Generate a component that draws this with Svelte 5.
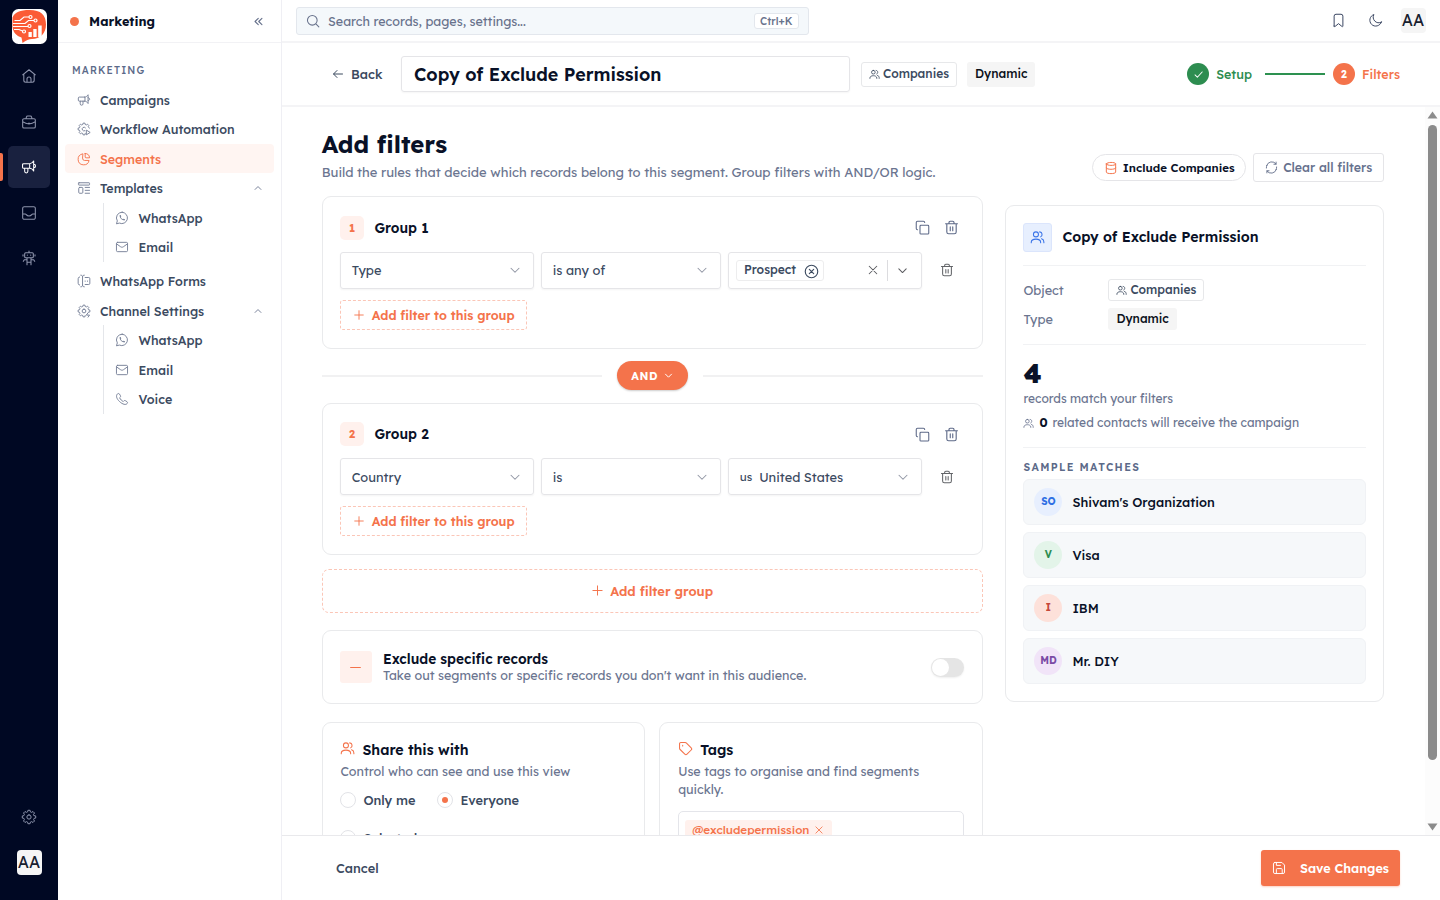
<script>
  function gear(from, to) {
    const points = [];
    for (let tooth = from; tooth < to; tooth++) {
      for (const [offset, radius] of [[-15, 8], [-9, 10.2], [9, 10.2], [15, 8]]) {
        const angle = ((tooth * 45 + offset) * Math.PI) / 180;
        points.push(`${(12 + radius * Math.cos(angle)).toFixed(2)} ${(12 + radius * Math.sin(angle)).toFixed(2)}`);
      }
    }
    return 'M' + points.join('L');
  }
  const hub = 'M12 8.800a3.200 3.200 0 1 0 0 6.400 3.200 3.200 0 0 0 0-6.400Z';

  const icons = {
    home: 'M2.5 10.2 12 2.6l9.5 7.6M4.2 9v9.5a3 3 0 0 0 3 3h9.6a3 3 0 0 0 3-3V9M9 21.5v-5a3 3 0 0 1 6 0v5',
    briefcase: 'M4.5 7h15a2 2 0 0 1 2 2v10a2 2 0 0 1-2 2h-15a2 2 0 0 1-2-2V9a2 2 0 0 1 2-2ZM7.5 7l.6-2.4a2 2 0 0 1 2-1.6h3.8a2 2 0 0 1 2 1.6l.6 2.4M2.5 11.5c6 4.3 13 4.3 19 0M11 14h2',
    megaphone: 'M13 7H4A1.700 1.700 0 0 0 2.300 8.700v3.600A1.700 1.700 0 0 0 4 14h9ZM13 7c2.500 0 4.700-1.700 6-4v15c-1.300-2.300-3.500-4-6-4M19 8c3.800 0 3.800 5 0 5M5.500 14v4.500a2.400 2.400 0 0 0 4.800 0V14',
    inbox: 'M5 2.500h14a2.500 2.500 0 0 1 2.500 2.500v14a2.500 2.500 0 0 1-2.500 2.500H5A2.500 2.500 0 0 1 2.500 19V5A2.500 2.500 0 0 1 5 2.500ZM2.500 13.500h4c1.500 0 1.500 3 5.500 3s4-3 5.500-3h4',
    robot: 'M12 1.500V4M7 4h10a1.500 1.500 0 0 1 1.500 1.500V10a1.500 1.500 0 0 1-1.500 1.500H7A1.500 1.500 0 0 1 5.500 10V5.500A1.500 1.500 0 0 1 7 4ZM9.500 7.500v.5M14.500 7.500v.5M3 7v2M21 7v2M9 11.500v7h6v-7M9 14.500H5L3.500 17M15 14.500h4l1.500 2.500M9 18.500V22M15 18.500V22',
    gear: gear(0, 8) + 'Z' + hub,
    gearPlay: gear(2, 8) + 'L21.500 10.500M14.500 10a3.200 3.200 0 1 0-1 5M16 14.500V22l6-3.750Z',
    gearBolt: gear(2, 9) + hub + 'M19 15l-3 4h5.500l-2.500 3.500',
    pie: 'M14 2.500v6a1.500 1.500 0 0 0 1.500 1.500h6C21.500 5.500 18.500 2.500 14 2.500ZM9.500 3.200A9.500 9.500 0 1 0 20.700 14.500H13a3.500 3.500 0 0 1-3.500-3.500Z',
    template: 'M3.500 3h17a1 1 0 0 1 1 1v2a1 1 0 0 1-1 1h-17a1 1 0 0 1-1-1V4a1 1 0 0 1 1-1ZM4.500 11h4a1.500 1.500 0 0 1 1.500 1.500v7A1.500 1.500 0 0 1 8.500 21h-4A1.500 1.500 0 0 1 3 19.500v-7A1.500 1.500 0 0 1 4.500 11ZM14 11h7.500M14 16h7.500M14 21h7.500',
    whatsapp: 'M12.300 2A9.800 9.800 0 0 0 4 17L2.500 22l5-1.300A9.800 9.800 0 1 0 12.300 2ZM9 7.800c-1.500 3.500 3.500 8.700 7.200 7.200M9 7.800l.8 2M16.200 15l-2-.8',
    mail: 'M4.500 4h15a2 2 0 0 1 2 2v12a2 2 0 0 1-2 2h-15a2 2 0 0 1-2-2V6a2 2 0 0 1 2-2ZM2.500 6.500 9.500 11.500c1.800 1.200 3.200 1.200 5 0L21.500 6.500',
    phone: 'M3.800 3.700c-2.500 2.500-1.500 7.500 4 12.700s10.800 6 12.800 3.600l.6-.8c.6-1 .3-2-.7-2.600l-2.700-1.700c-1-.6-1.900-.4-2.600.3l-1 1c-2.500-1-5-3.500-6.200-6.300l1-1c.7-.8.8-1.700.3-2.600L7.600 3.500c-.6-1-1.700-1.300-2.600-.7Z',
    forms: 'M6.500 2c2 0 3 1 3 3v14c0 2-1 3-3 3M12.500 2c-2 0-3 1-3 3M12.500 22c-2 0-3-1-3-3M4.500 5A3 3 0 0 0 2 8v8a3 3 0 0 0 2.500 3M14 6h6a2 2 0 0 1 2 2v8a2 2 0 0 1-2 2h-6M14 12v.5M18 12v.5',
    up: 'M5 15.500l7-7 7 7',
    down: 'M4 8.500l8 8 8-8',
    collapse: 'M11.500 5l-7 7 7 7M19.500 5l-7 7 7 7',
    search: 'M10.800 2.500a8.300 8.300 0 1 0 0 16.600 8.300 8.300 0 0 0 0-16.600ZM17 17l5 5',
    bookmark: 'M5 21V5a3 3 0 0 1 3-3h8a3 3 0 0 1 3 3v16c0 1-1 1-1.600.4L12 17l-5.400 4.400C6 22 5 22 5 21Z',
    moon: 'M21.500 14.500A9.500 9.500 0 1 1 9.500 2.500c-4.500 7 4 17 12 12Z',
    back: 'M21 12H3.500M10 5l-7 7 7 7',
    users: 'M9.500 3a4 4 0 1 0 0 8 4 4 0 0 0 0-8ZM2 20.500v-1c0-6.500 15-6.500 15 0v1M15.500 3c4.500 0 5 6.500 1.500 8M18.500 14c2.500.8 3.700 2.500 3.700 5v1.500',
    check: 'M4.500 13l5 5L20 6.500',
    database: 'M4 5c0-3.500 16-3.500 16 0s-16 3.500-16 0ZM4 5v14c0 3.500 16 3.500 16 0V5M4 12c0 3.200 16 3.200 16 0',
    refresh: 'M20.500 5.500A10 10 0 0 0 3 8.500M2.500 13a9.500 9.500 0 0 1 1-5M20.500 2v4h-4M3.500 18.500A10 10 0 0 0 21 15.500M21.500 11a9.500 9.500 0 0 1-1 5M3.500 22v-4h4',
    copy: 'M10.500 8.500h10a1.500 1.500 0 0 1 1.500 1.500v11a1.500 1.500 0 0 1-1.500 1.500h-11A1.500 1.500 0 0 1 8 21V10a1.500 1.500 0 0 1 1.500-1.500ZM4 15.500A2 2 0 0 1 2 13.500V4a2 2 0 0 1 2-2h9.500a2 2 0 0 1 2 2',
    trash: 'M2.500 6h19M8 6V4a2 2 0 0 1 2-2h4a2 2 0 0 1 2 2v2M4.500 6v13a3 3 0 0 0 3 3h9a3 3 0 0 0 3-3V6M10 11v6M14 11v6',
    plus: 'M12 3.500v17M3.500 12h17',
    minus: 'M3 12h18',
    close: 'M4.500 4.500l15 15M19.500 4.500l-15 15',
    circleX: 'M12 2a10 10 0 1 0 0 20 10 10 0 0 0 0-20ZM8.500 8.500l7 7M15.500 8.500l-7 7',
    tag: 'M4.500 2.500h7a3 3 0 0 1 2.100.9l7.500 7.500a2.500 2.500 0 0 1 0 3.500l-6.700 6.700a2.500 2.500 0 0 1-3.500 0l-7.500-7.500a3 3 0 0 1-.9-2.100v-7a2 2 0 0 1 2-2ZM7.500 7v1',
    save: 'M5 2.500h12L21.500 7v12a2.500 2.500 0 0 1-2.500 2.500H5A2.500 2.500 0 0 1 2.500 19V5A2.500 2.500 0 0 1 5 2.500ZM7.500 21.500v-7a1.500 1.500 0 0 1 1.500-1.500h7a1.500 1.500 0 0 1 1.500 1.500v7M7.500 2.500v5h7'
  };
  const rail = ['home', 'briefcase', 'megaphone', 'inbox', 'robot'];
  const nav = [
    { icon: 'megaphone', label: 'Campaigns' },
    { icon: 'gearPlay', label: 'Workflow Automation' },
    { icon: 'pie', label: 'Segments', active: true },
    { icon: 'template', label: 'Templates', children: [{ icon: 'whatsapp', label: 'WhatsApp' }, { icon: 'mail', label: 'Email' }] },
    { icon: 'forms', label: 'WhatsApp Forms' },
    { icon: 'gearBolt', label: 'Channel Settings', children: [{ icon: 'whatsapp', label: 'WhatsApp' }, { icon: 'mail', label: 'Email' }, { icon: 'phone', label: 'Voice' }] }
  ];
  const matches = [
    { initials: 'SO', name: "Shivam's Organization", tone: 'blue' },
    { initials: 'V', name: 'Visa', tone: 'green' },
    { initials: 'I', name: 'IBM', tone: 'red' },
    { initials: 'MD', name: 'Mr. DIY', tone: 'purple' }
  ];
</script>

{#snippet icon(name, size = 14, weight = 1.5)}
  <svg width={size} height={size} viewBox="0 0 24 24" fill="none" stroke="currentColor" stroke-width={weight} stroke-linecap="round" stroke-linejoin="round"><path d={icons[name]} /></svg>
{/snippet}

{#snippet companies()}
  <span class="badge outline">{@render icon('users', 11, 1.8)}Companies</span>
{/snippet}

{#snippet groupHead(n)}
  <div class="group-head">
    <span class="num">{n}</span>
    <h3>Group {n}</h3>
    <span class="tools">{@render icon('copy', 15, 1.7)}{@render icon('trash', 15, 1.8)}</span>
  </div>
{/snippet}

{#snippet select(label)}
  <div class="select"><span>{label}</span>{@render icon('down', 12, 2.1)}</div>
{/snippet}

<div class="app">
  <nav class="rail">
    <svg class="logo" width="35" height="35" viewBox="0 0 35 35">
      <rect width="35" height="35" rx="6.500" fill="#fff" />
      <path d="M.5 8.500C3 3 8 1 17.500 1 29 1 34 6 34 15.500c0 9-6 14.500-14 14.500-3 0-6 1.500-9.500 4L9.500 28.500C4.500 27 .5 23 .5 17Z" fill="#fb5b35" />
      <g fill="none" stroke="#fff" stroke-width="1.200">
        <path d="M2.500 11.500H8l4-3.500h5M1 14.500h12l3.500-3h5.500M1 17.500h15M2 20.500h5l3.500 1.500" />
        <circle cx="18.500" cy="8" r="1.500" /><circle cx="23.500" cy="11.500" r="1.500" /><circle cx="17.500" cy="17" r="1.500" /><circle cx="12" cy="22.500" r="1.500" />
      </g>
      <path d="M16.500 23h3.300v5h-3.300zM21.300 20h3.300v8h-3.300zM26.200 16.500h3.500V28h-3.500z" fill="#fff" />
    </svg>
    {#each rail as name}
      <span class="rail-item" class:active={name === 'megaphone'}>{@render icon(name, 16, 1.6)}</span>
    {/each}
    <span class="rail-item bottom">{@render icon('gear', 16, 1.5)}</span>
    <span class="avatar">AA</span>
  </nav>

  <aside>
    <header class="side-head"><i></i><b>Marketing</b>{@render icon('collapse', 11, 2.4)}</header>
    <div class="side-title">MARKETING</div>
    {#each nav as item}
      <div class="nav-item" class:active={item.active}>
        {@render icon(item.icon, 14, 1.6)}<span>{item.label}</span>
        {#if item.children}{@render icon('up', 10, 2.3)}{/if}
      </div>
      {#if item.children}
        <div class="sub">
          {#each item.children as child}
            <div class="nav-item">{@render icon(child.icon, 14, 1.6)}<span>{child.label}</span></div>
          {/each}
        </div>
      {/if}
    {/each}
  </aside>

  <main>
    <header class="topbar">
      <div class="search">{@render icon('search', 14, 1.8)}<span>Search records, pages, settings...</span><kbd>Ctrl+K</kbd></div>
      <div class="top-actions">{@render icon('bookmark', 15, 1.6)}{@render icon('moon', 15, 1.6)}<span class="avatar">AA</span></div>
    </header>

    <header class="pagebar">
      <span class="back">{@render icon('back', 12, 2)}Back</span>
      <div class="title-input">Copy of Exclude Permission</div>
      {@render companies()}
      <span class="badge solid">Dynamic</span>
      <div class="steps">
        <span class="dot done">{@render icon('check', 11, 2.2)}</span><span class="done-text">Setup</span>
        <i></i>
        <span class="dot">2</span><span class="current-text">Filters</span>
      </div>
    </header>

    <div class="viewport">
      <div class="content">
        <section class="left">
          <h1>Add filters</h1>
          <p class="lead">Build the rules that decide which records belong to this segment. Group filters with AND/OR logic.</p>

          <div class="card group">
            {@render groupHead(1)}
            <div class="filters">
              {@render select('Type')}
              {@render select('is any of')}
              <div class="select multi">
                <span class="chip">Prospect {@render icon('circleX', 15, 1.8)}</span>
                {@render icon('close', 12, 2.1)}<i></i>{@render icon('down', 11, 2.3)}
              </div>
              {@render icon('trash', 14, 1.8)}
            </div>
            <div class="add-filter">{@render icon('plus', 12, 1.8)}<span>Add filter to this group</span></div>
          </div>

          <div class="joiner"><i></i><span>AND {@render icon('down', 9, 2.6)}</span><i></i></div>

          <div class="card group">
            {@render groupHead(2)}
            <div class="filters">
              {@render select('Country')}
              {@render select('is')}
              <div class="select"><small>us</small><span class="country">United States</span>{@render icon('down', 12, 2.1)}</div>
              {@render icon('trash', 14, 1.8)}
            </div>
            <div class="add-filter">{@render icon('plus', 12, 1.8)}<span>Add filter to this group</span></div>
          </div>

          <div class="add-group">{@render icon('plus', 13, 1.8)}<span>Add filter group</span></div>

          <div class="card exclude">
            <span class="minus">{@render icon('minus', 13, 2)}</span>
            <div>
              <h3>Exclude specific records</h3>
              <p>Take out segments or specific records you don't want in this audience.</p>
            </div>
            <span class="toggle"><i></i></span>
          </div>

          <div class="pair">
            <div class="card small">
              <h3>{@render icon('users', 15, 1.7)}Share this with</h3>
              <p>Control who can see and use this view</p>
              <div class="radios">
                <label class="first"><i></i>Only me</label>
                <label><i class="on"></i>Everyone</label>
              </div>
              <div class="radios second"><label><i></i>Selected users</label></div>
            </div>
            <div class="card small">
              <h3>{@render icon('tag', 15, 1.7)}Tags</h3>
              <p>Use tags to organise and find segments quickly.</p>
              <div class="tag-box"><span>@excludepermission {@render icon('close', 10, 2)}</span></div>
            </div>
          </div>
        </section>

        <section class="right">
          <div class="actions">
            <span class="include">{@render icon('database', 14, 1.7)}Include Companies</span>
            <span class="clear">{@render icon('refresh', 13, 1.7)}Clear all filters</span>
          </div>
          <div class="card summary">
            <div class="sum-head"><span>{@render icon('users', 15, 1.7)}</span><h3>Copy of Exclude Permission</h3></div>
            <div class="facts">
              <div><span>Object</span>{@render companies()}</div>
              <div><span>Type</span><span class="badge solid">Dynamic</span></div>
            </div>
            <div class="count">
              <strong>4</strong>
              <p>records match your filters</p>
              <p class="related">{@render icon('users', 11, 1.8)}<b>0</b><span>related contacts will receive the campaign</span></p>
            </div>
            <h4>SAMPLE MATCHES</h4>
            {#each matches as m}
              <div class="match"><i class={m.tone}>{m.initials}</i><span>{m.name}</span></div>
            {/each}
          </div>
        </section>
      </div>
      <div class="scrollbar">
        <svg width="11" height="8" viewBox="0 0 11 8"><path d="M5.500.5 10.500 7.500H.5Z" fill="#8b8b8b" /></svg>
        <i></i>
        <svg class="end" width="11" height="8" viewBox="0 0 11 8"><path d="M.5.5h10l-5 7Z" fill="#8b8b8b" /></svg>
      </div>
    </div>

    <footer><span>Cancel</span><button>{@render icon('save', 14, 1.7)}Save Changes</button></footer>
  </main>
</div>

<style>
  :global(body) { margin: 0; overflow: hidden; }
  .app { display: flex; width: 1440px; height: 900px; overflow: hidden; background: #fff; color: #3b4a5f; font: 400 12.800px/16px Lexend, Inter, "Noto Sans", sans-serif; }
  .app * { box-sizing: border-box; }
  h1, h3, h4, p { margin: 0; }
  svg { flex: none; display: block; }
  i { font-style: normal; flex: none; }
  h3 { font-size: 13.700px; font-weight: 600; color: #091127; }
  p { color: #6b7590; }

  .rail { width: 58px; flex: none; background: #000823; color: #8d94ac; display: flex; flex-direction: column; align-items: center; padding: 9px 0 25px; }
  .logo { margin-bottom: 11px; }
  .rail-item { width: 58px; height: 42px; margin-bottom: 3.500px; display: grid; place-items: center; position: relative; }
  .rail-item.active { width: 42px; background: #19213f; border-radius: 5px; color: #fff; }
  .rail-item.active::before { content: ''; position: absolute; left: -8px; top: 7px; width: 3px; height: 28px; background: #f4734b; border-radius: 0 2px 2px 0; }
  .rail-item.bottom { margin-top: auto; margin-bottom: 12.500px; }
  .avatar { width: 25px; height: 25px; border-radius: 4px; background: #f5f5f5; color: #17202e; font-size: 16px; line-height: 25px; display: flex; justify-content: center; }

  aside { width: 224px; flex: none; border-right: 1px solid #efeff4; }
  .side-head { height: 43px; border-bottom: 1px solid #f2f2f5; display: flex; align-items: center; padding: 0 17.500px 0 12px; color: #65708b; }
  .side-head i { width: 9px; height: 9px; border-radius: 50%; background: #f4734b; margin-right: 10px; }
  .side-head b { flex: 1; color: #091127; font-size: 12.700px; font-weight: 700; }
  .side-title { padding: 19.500px 0 6.300px 14px; font-size: 10px; font-weight: 500; letter-spacing: 1.150px; color: #5c6a89; }
  .nav-item { height: 29.500px; margin: 0 7px; padding: 0 11px 0 12px; display: flex; align-items: center; gap: 9px; border-radius: 4px; font-size: 12.500px; font-weight: 500; color: #3b4a5f; }
  .nav-item span { flex: 1; }
  .nav-item svg { color: #747e96; }
  .nav-item.active { background: #fff5f2; color: #f4734b; }
  .nav-item.active svg { color: #f4734b; }
  .sub { margin: 0 0 4.500px 45px; border-left: 1px solid #e4e6ea; }
  .sub .nav-item { margin: 0; padding-left: 11px; gap: 9.500px; }

  main { flex: 1; min-width: 0; display: flex; flex-direction: column; }
  .topbar { height: 43px; flex: none; border-bottom: 2px solid #f4f4f6; padding: 0 14.500px 0 14px; display: flex; align-items: center; justify-content: space-between; }
  .search { width: 513px; height: 28px; background: #f4f8fb; border: 1px solid #e3e7ed; border-radius: 3px; display: flex; align-items: center; padding: 0 9px; color: #68728c; font-size: 12.500px; }
  .search span { flex: 1; margin-left: 8px; }
  kbd { font: 500 10.500px/14px Lexend, Inter, sans-serif; background: #fff; border: 1px solid #e3e7ed; border-radius: 3px; padding: 0 5.500px; color: #68728c; }
  .top-actions { display: flex; align-items: center; gap: 22px; color: #3b4763; }
  .top-actions .avatar { margin-left: -4px; }

  .pagebar { height: 64px; flex: none; border-bottom: 2px solid #f4f4f6; padding: 0 40px 0 50px; display: flex; align-items: center; }
  .back { width: 69px; display: flex; align-items: center; gap: 7px; font-weight: 500; color: #3b4a5f; }
  .title-input { width: 449px; height: 36px; border: 1px solid #e5e5e8; border-radius: 3px; box-shadow: 0 1px 2px #0000000a; padding-left: 12px; font-size: 17.900px; font-weight: 600; line-height: 35px; color: #091127; margin-right: 11px; }
  .badge { height: 25px; padding: 0 8px; border-radius: 3px; display: inline-flex; align-items: center; gap: 3px; font-weight: 500; font-size: 12px; }
  .badge.outline { border: 1px solid #e7e8ea; padding: 0 7px; }
  .badge.solid { background: #f5f5f5; color: #0c111b; }
  .pagebar .badge.solid { margin-left: 10px; }
  .steps { margin-left: auto; display: flex; align-items: center; font-weight: 500; font-size: 12.500px; line-height: 15px; }
  .steps i { width: 60px; height: 2px; background: #2d9150; margin: 0 8px 0 13px; }
  .dot { width: 22px; height: 22px; border-radius: 50%; background: #f4734b; color: #fff; display: grid; place-items: center; font-size: 10.500px; font-weight: 700; margin-right: 7px; }
  .dot.done { background: #2d8d50; }
  .done-text { color: #2d8d50; }
  .current-text { color: #f4734b; }

  .viewport { flex: 1; min-height: 0; display: flex; overflow: hidden; }
  .content { flex: 1; padding: 23px 40px 0 39.700px; display: flex; gap: 22px; height: 728px; overflow: hidden; }
  .left { width: 661px; flex: none; }
  .right { width: 379.500px; flex: none; padding-top: 23px; }
  h1 { font-size: 23.900px; line-height: 28px; font-weight: 700; color: #091127; }
  .lead { margin: 5.500px 0 16.500px; font-size: 13px; white-space: nowrap; }
  .card { border: 1px solid #e9eaec; border-radius: 9px; background: #fff; }
  .group { padding: 18.500px 17.300px 17px; height: 152.500px; }
  .group-head { display: flex; align-items: center; height: 24px; margin-bottom: 12px; }
  .num { width: 24px; height: 24px; border-radius: 5px; background: #fff1ed; color: #f4734b; display: grid; place-items: center; font-size: 11px; font-weight: 700; margin-right: 10.500px; }
  .tools { margin-left: auto; display: flex; gap: 14px; padding-right: 5px; color: #5d6988; }
  .filters { display: grid; grid-template-columns: 194px 180px 194px 14px; gap: 7px; align-items: center; color: #626468; }
  .filters > :global(svg) { margin-left: 11px; }
  .select { height: 37px; border: 1px solid #e5e5e8; border-radius: 3px; box-shadow: 0 1px 2px #0000000c; display: flex; align-items: center; padding: 0 12px 0 10.700px; color: #3b4a5f; }
  .select > span:not(.chip) { flex: 1; }
  .select > svg { color: #9095a3; }
  .select small { font-size: 11.500px; margin-right: 7px; }
  .multi { padding: 0 12.500px 0 7px; }
  .multi > svg { color: #5c5d61; }
  .multi > i { width: 1px; height: 21px; background: #dcdcdf; margin: 0 9px 0 8px; }
  .chip { height: 21px; border: 1px solid #ededee; border-radius: 3px; display: flex; align-items: center; gap: 8px; padding: 0 4px 0 7px; font-size: 12.100px; font-weight: 500; margin-right: auto; }
  .chip svg { margin-top: 2px; }
  .add-filter { width: 187px; height: 30px; margin-top: 11px; border: 1px dashed #fbc6b7; border-radius: 3px; display: flex; align-items: center; justify-content: center; gap: 6.500px; color: #f4734b; font-size: 12.500px; font-weight: 600; white-space: nowrap; padding-left: 1px; }
  .joiner { height: 54px; display: flex; align-items: center; justify-content: space-between; }
  .joiner i { width: 280px; height: 2px; background: #f1f1f2; }
  .joiner span { width: 71px; height: 29px; border-radius: 15px; background: #f4734b; color: #fff; font-size: 11px; font-weight: 700; letter-spacing: 0.700px; display: flex; align-items: center; justify-content: center; gap: 6px; box-shadow: 0 1px 2px #0003; }
  .add-group { height: 44px; margin: 13.500px 0 17.500px; border: 1px dashed #fbc6b7; border-radius: 7px; display: flex; align-items: center; justify-content: center; gap: 6px; color: #f4734b; font-size: 12.900px; font-weight: 600; }
  .exclude { height: 73.500px; display: flex; align-items: center; padding: 1px 17.300px 0; }
  .minus { width: 32px; height: 32px; border-radius: 3px; background: #fff1ed; color: #f4734b; display: grid; place-items: center; margin-right: 11px; }
  .exclude h3 { line-height: 16.500px; }
  .exclude p { line-height: 17px; font-size: 12.500px; }
  .toggle { width: 33px; height: 19px; background: #e5e5e5; border-radius: 10px; padding: 1px; margin-left: auto; box-shadow: 0 1px 2px #0001; }
  .toggle i { display: block; width: 17px; height: 17px; border-radius: 50%; background: #fff; }
  .pair { display: grid; grid-template-columns: 1fr 1fr; gap: 14.500px; margin-top: 18px; }
  .small { height: 180px; padding: 17px 17.700px; }
  .small h3 { display: flex; align-items: center; gap: 7px; height: 20px; font-size: 14.200px; }
  .small h3 svg { color: #f4734b; margin-top: -2px; }
  .small p { line-height: 18px; margin-top: 2.500px; font-size: 12.500px; }
  .radios { display: flex; margin-top: 11.500px; font-weight: 500; font-size: 12.800px; }
  label { display: flex; align-items: center; gap: 7px; height: 16px; }
  label.first { width: 97px; }
  label i { width: 16px; height: 16px; border: 1px solid #e2e3e7; border-radius: 50%; display: grid; place-items: center; }
  .on::after { content: ''; width: 6px; height: 6px; border-radius: 50%; background: #f4734b; }
  .second { margin-top: 22px; }
  .tag-box { margin-top: 12.500px; height: 60px; border: 1px solid #e4e5ea; border-radius: 5px; padding: 8px 6px; }
  .tag-box span { display: inline-flex; align-items: center; gap: 5px; height: 20px; padding: 0 8px 0 7px; background: #fff1ed; color: #f4734b; border-radius: 3px; font-size: 11.600px; font-weight: 500; }

  .actions { display: flex; justify-content: flex-end; align-items: center; gap: 7px; height: 29px; margin-bottom: 22.700px; }
  .include { width: 154px; height: 27px; border: 1px solid #e5e5e8; border-radius: 14px; display: flex; align-items: center; justify-content: center; gap: 5px; font-size: 11.500px; font-weight: 600; color: #091127; white-space: nowrap; }
  .include svg { color: #f4734b; }
  .clear { width: 131px; height: 29px; border: 1px solid #e5e5e8; border-radius: 3px; display: flex; align-items: center; justify-content: center; gap: 5px; font-size: 12.400px; font-weight: 500; color: #66718d; white-space: nowrap; }
  .summary { height: 497px; padding: 17.500px 17.700px; }
  .sum-head { display: flex; align-items: center; gap: 10px; height: 43px; padding-bottom: 13.500px; border-bottom: 1px solid #f1f2f4; }
  .sum-head h3 { font-size: 14.200px; line-height: 17px; }
  .sum-head span { width: 29px; height: 29px; border: 1px solid #dbe5fc; background: #e7effe; border-radius: 3px; color: #3a74e8; display: grid; place-items: center; }
  .facts { height: 79px; border-bottom: 1px solid #f1f2f4; padding-top: 13.300px; }
  .facts div { display: flex; align-items: center; height: 22px; margin-bottom: 7px; }
  .facts div > span:first-child { width: 85px; color: #6b7590; font-size: 12.700px; line-height: 17px; }
  .facts .badge { height: 22px; }
  .count { height: 102.500px; border-bottom: 1px solid #f1f2f4; padding-top: 14px; font-size: 12px; }
  .count strong { display: block; font-size: 26.500px; line-height: 28px; font-weight: 800; color: #091127; }
  .count p { margin-top: 4px; }
  .count .related { display: flex; align-items: center; gap: 5px; margin-top: 8px; }
  .related b { color: #091127; }
  h4 { font-size: 10.600px; line-height: 14px; font-weight: 600; letter-spacing: 1.350px; color: #5c6a89; margin: 12.300px 0 5.300px; }
  .match { height: 46px; margin-bottom: 6.800px; background: #f6f8fa; border: 1px solid #f0f2f5; border-radius: 6px; display: flex; align-items: center; padding-left: 10px; gap: 10px; font-size: 12.800px; font-weight: 500; color: #091127; }
  .match i { width: 28px; height: 28px; border-radius: 50%; display: grid; place-items: center; font-size: 10px; font-weight: 700; }
  .blue { background: #e7effe; color: #2f6fe4; }
  .green { background: #e3f4e9; color: #2d8d50; }
  .red { background: #fde1da; color: #c5483a; }
  .purple { background: #f1e4f8; color: #7a4aa5; }

  .scrollbar { width: 15px; flex: none; background: #fcfcfc; display: flex; flex-direction: column; align-items: center; padding: 4px 0; }
  .scrollbar i { width: 9px; height: 635px; border-radius: 5px; background: #8b8b8b; margin-top: 6px; }
  .end { margin-top: auto; }
  footer { height: 65px; flex: none; border-top: 1px solid #e9e9ec; padding: 0 40px 0 54px; display: flex; align-items: center; justify-content: space-between; font-weight: 500; }
  button { width: 139px; height: 36px; border: 0; border-radius: 3px; background: #f4734b; color: #fff; font: inherit; font-size: 12.600px; font-weight: 600; display: flex; align-items: center; justify-content: center; gap: 14px; padding: 0; box-shadow: 0 1px 2px #f4734b55; }
</style>
